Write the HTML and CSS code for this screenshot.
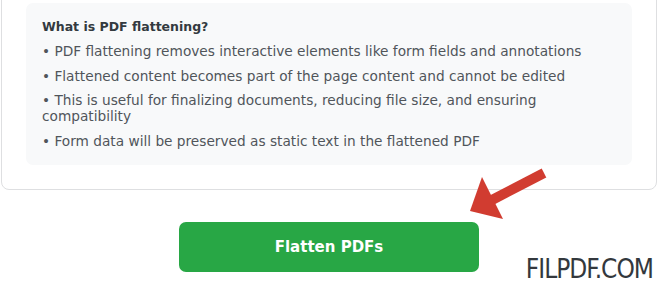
FILE: index.html
```html
<!DOCTYPE html>
<html>
<head>
<meta charset="utf-8">
<link rel="stylesheet" href="styles.css">
</head>
<body>
<div class="page">
  <div class="card">
    <div class="info">
      <h3 class="info-title">What is PDF flattening?</h3>
      <p class="info-item">• PDF flattening removes interactive elements like form fields and annotations</p>
      <p class="info-item">• Flattened content becomes part of the page content and cannot be edited</p>
      <p class="info-item">• This is useful for finalizing documents, reducing file size, and ensuring compatibility</p>
      <p class="info-item">• Form data will be preserved as static text in the flattened PDF</p>
    </div>
  </div>
  <div class="actions">
    <button class="btn-flatten">Flatten PDFs</button>
  </div>
  <svg class="arrow" width="658" height="287" viewBox="0 0 658 287">
    <line x1="544" y1="173" x2="492" y2="200" stroke="#d13c30" stroke-width="10"/>
    <polygon points="482,177 470,211 503,219" fill="#d13c30"/>
  </svg>
  <div class="watermark">FILPDF.COM</div>
</div>
</body>
</html>
```

FILE: styles.css
```css
html, body {
  margin: 0;
  padding: 0;
  background: #ffffff;
  overflow: hidden;
}
.page {
  position: relative;
  display: flow-root;
  width: 658px;
  height: 287px;
  overflow: hidden;
  font-family: "DejaVu Sans", sans-serif;
}
.card {
  margin: -26px 1px 0 1px;
  padding: 28px 24px 24px 24px;
  border: 1px solid #dedfe1;
  border-radius: 8px;
  background: #fff;
}
.info {
  background: #f8f9fa;
  border-radius: 7px;
  padding: 14px 16px 16px 16px;
}
.info-title {
  margin: 0 0 6px 0;
  font-size: 12.5px;
  font-weight: bold;
  color: #333a40;
  line-height: 20px;
}
.info-item {
  margin: 0 0 8.5px 0;
  font-size: 13.7px;
  line-height: 16px;
  color: #50555a;
}
.info-item:last-child {
  margin-bottom: 0;
}
.actions {
  display: flex;
  justify-content: center;
  margin-top: 32px;
}
.btn-flatten {
  width: 300px;
  height: 50px;
  border: none;
  border-radius: 7px;
  background: #28a745;
  color: #fff;
  font-family: "DejaVu Sans", sans-serif;
  font-weight: bold;
  font-size: 15px;
}
.arrow {
  position: absolute;
  left: 0;
  top: 0;
  pointer-events: none;
}
.watermark {
  position: absolute;
  right: 5px;
  bottom: 3px;
  font-family: "Liberation Sans Narrow", "DejaVu Sans Condensed", sans-serif;
  font-size: 26px;
  letter-spacing: -1px;
  color: #33383d;
  line-height: 30px;
}
```
